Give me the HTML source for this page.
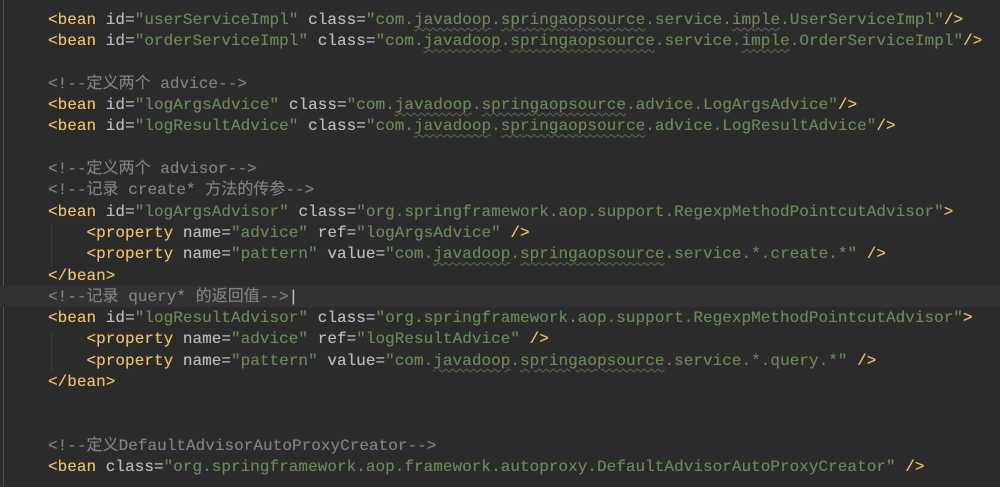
<!DOCTYPE html>
<html><head><meta charset="utf-8"><style>
html,body{margin:0;padding:0;background:#2b2b2b;width:1000px;height:487px;overflow:hidden}
.g{position:absolute;left:3px;top:0;width:1px;height:487px;background:#555}
.hl{position:absolute;left:0;top:286px;width:1000px;height:21px;background:#323232}
pre{position:absolute;left:48px;top:10px;margin:0;font-family:"Liberation Mono","Noto Sans CJK SC",monospace;font-size:16px;line-height:21.3px;color:#bababa;letter-spacing:0.03px;text-shadow:0 0 0.4px currentColor}
.t{color:#e8bf6a}.v{color:#6a8759}.c{color:#808080}
u{text-decoration:underline wavy #4f5f45;text-decoration-thickness:1px;text-underline-offset:3px}
.guide{position:absolute;left:51px;top:225px;width:1px;height:42px;background:#3a3a3a}
.guide2{position:absolute;left:51px;top:331px;width:1px;height:42px;background:#3a3a3a}
</style></head><body>
<div class="g"></div><div class="hl"></div><div class="guide"></div><div class="guide2"></div>
<pre><span class="t">&lt;bean</span> id=<span class="v">"userServiceImpl"</span> class=<span class="v">"com.<u>javadoop</u>.<u>springaopsource</u>.service.<u>imple</u>.UserServiceImpl"</span><span class="t">/&gt;</span>
<span class="t">&lt;bean</span> id=<span class="v">"orderServiceImpl"</span> class=<span class="v">"com.<u>javadoop</u>.<u>springaopsource</u>.service.<u>imple</u>.OrderServiceImpl"</span><span class="t">/&gt;</span>

<span class="c">&lt;!--定义两个 advice--&gt;</span>
<span class="t">&lt;bean</span> id=<span class="v">"logArgsAdvice"</span> class=<span class="v">"com.<u>javadoop</u>.<u>springaopsource</u>.advice.LogArgsAdvice"</span><span class="t">/&gt;</span>
<span class="t">&lt;bean</span> id=<span class="v">"logResultAdvice"</span> class=<span class="v">"com.<u>javadoop</u>.<u>springaopsource</u>.advice.LogResultAdvice"</span><span class="t">/&gt;</span>

<span class="c">&lt;!--定义两个 advisor--&gt;</span>
<span class="c">&lt;!--记录 create* 方法的传参--&gt;</span>
<span class="t">&lt;bean</span> id=<span class="v">"logArgsAdvisor"</span> class=<span class="v">"org.springframework.aop.support.RegexpMethodPointcutAdvisor"</span><span class="t">&gt;</span>
    <span class="t">&lt;property</span> name=<span class="v">"advice"</span> ref=<span class="v">"logArgsAdvice"</span> <span class="t">/&gt;</span>
    <span class="t">&lt;property</span> name=<span class="v">"pattern"</span> value=<span class="v">"com.<u>javadoop</u>.<u>springaopsource</u>.service.*.create.*"</span> <span class="t">/&gt;</span>
<span class="t">&lt;/bean&gt;</span>
<span class="c">&lt;!--记录 query* 的返回值--&gt;</span><span style="color:#bbb">|</span>
<span class="t">&lt;bean</span> id=<span class="v">"logResultAdvisor"</span> class=<span class="v">"org.springframework.aop.support.RegexpMethodPointcutAdvisor"</span><span class="t">&gt;</span>
    <span class="t">&lt;property</span> name=<span class="v">"advice"</span> ref=<span class="v">"logResultAdvice"</span> <span class="t">/&gt;</span>
    <span class="t">&lt;property</span> name=<span class="v">"pattern"</span> value=<span class="v">"com.<u>javadoop</u>.<u>springaopsource</u>.service.*.query.*"</span> <span class="t">/&gt;</span>
<span class="t">&lt;/bean&gt;</span>


<span class="c">&lt;!--定义DefaultAdvisorAutoProxyCreator--&gt;</span>
<span class="t">&lt;bean</span> class=<span class="v">"org.springframework.aop.framework.autoproxy.DefaultAdvisorAutoProxyCreator"</span> <span class="t">/&gt;</span></pre>
</body></html>
